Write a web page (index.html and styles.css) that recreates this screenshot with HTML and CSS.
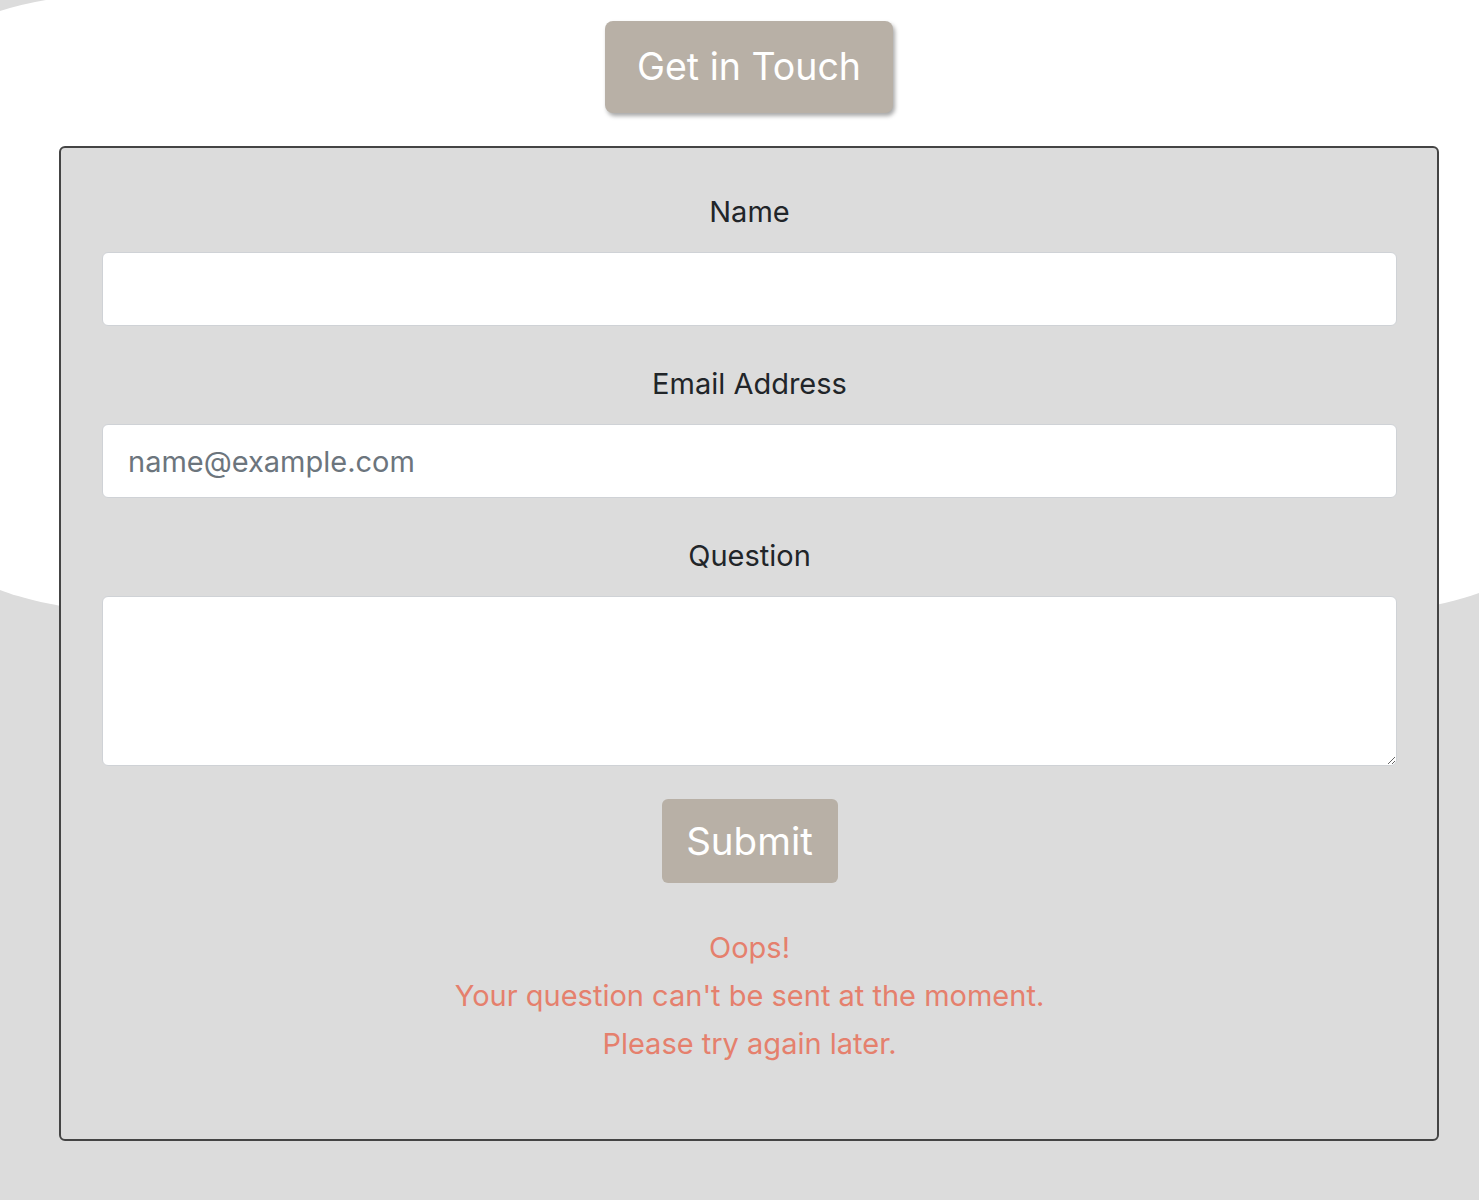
FILE: index.html
```html
<!DOCTYPE html>
<html lang="en">
<head>
<meta charset="utf-8">
<title>Get in Touch</title>
<link rel="stylesheet" href="styles.css">
</head>
<body>
<svg class="backdrop" width="1479" height="680" viewBox="0 0 1479 680" aria-hidden="true">
  <path d="M46,0 L1479,0 L1479,593 C1300,662 180,662 0,590 L0,11 Q22,4 46,0 Z" fill="#ffffff"/>
</svg>
<div class="page">
  <div class="header">
    <button class="touch-btn" type="button">Get in Touch</button>
  </div>
  <form class="card">
    <label class="field-label" for="name">Name</label>
    <input class="field-input" id="name" type="text">
    <label class="field-label" for="email">Email Address</label>
    <input class="field-input" id="email" type="email" placeholder="name@example.com">
    <label class="field-label" for="question">Question</label>
    <textarea class="field-input field-area" id="question"></textarea>
    <div class="actions">
      <button class="submit-btn" type="button">Submit</button>
    </div>
    <div class="error">
      <div>Oops!</div>
      <div>Your question can't be sent at the moment.</div>
      <div>Please try again later.</div>
    </div>
  </form>
</div>
</body>
</html>
```
FILE: styles.css
```css
html, body {
  margin: 0;
  padding: 0;
}
body {
  background: #dcdcdc;
  font-family: Inter, "Noto Sans", "Liberation Sans", sans-serif;
  color: #212529;
  min-height: 1200px;
  position: relative;
}
.backdrop {
  position: absolute;
  top: 0;
  left: 0;
  z-index: 0;
  display: block;
}
.page {
  position: relative;
  z-index: 1;
  padding: 21px 40px 0 59px;
}
.header {
  display: flex;
  justify-content: center;
}
.touch-btn {
  font-family: inherit;
  font-size: 37.5px;
  line-height: 92px;
  height: 92px;
  width: 288px;
  padding: 0;
  border: none;
  border-radius: 8px;
  background: #b8b0a6;
  color: #ffffff;
  box-shadow: 2px 3px 4px rgba(0, 0, 0, 0.35);
}
.card {
  margin-top: 33px;
  background: #dcdcdc;
  border: 2px solid #444444;
  border-radius: 6px;
  padding: 44px 40px 71px 41px;
  display: flex;
  flex-direction: column;
}
.field-label {
  display: block;
  text-align: center;
  font-size: 29px;
  line-height: 40px;
  margin-bottom: 20px;
  color: #212529;
}
.field-input {
  box-sizing: border-box;
  width: 100%;
  height: 74px;
  border: 1px solid #cfd2d6;
  border-radius: 6px;
  background: #ffffff;
  padding: 0 25px;
  font-family: inherit;
  font-size: 29px;
  color: #495057;
  margin: 0 0 38px 0;
}
.field-input::placeholder {
  color: #6c757d;
}
.field-area {
  height: 170px;
  resize: vertical;
  margin-bottom: 33px;
}
.actions {
  display: flex;
  justify-content: center;
}
.submit-btn {
  font-family: inherit;
  font-size: 38.5px;
  width: 176px;
  height: 84px;
  padding: 0;
  border: none;
  border-radius: 6px;
  background: #b8b0a6;
  color: #ffffff;
}
.error {
  margin-top: 41px;
  text-align: center;
  color: #e5806d;
  font-size: 29px;
  line-height: 48px;
}
```
